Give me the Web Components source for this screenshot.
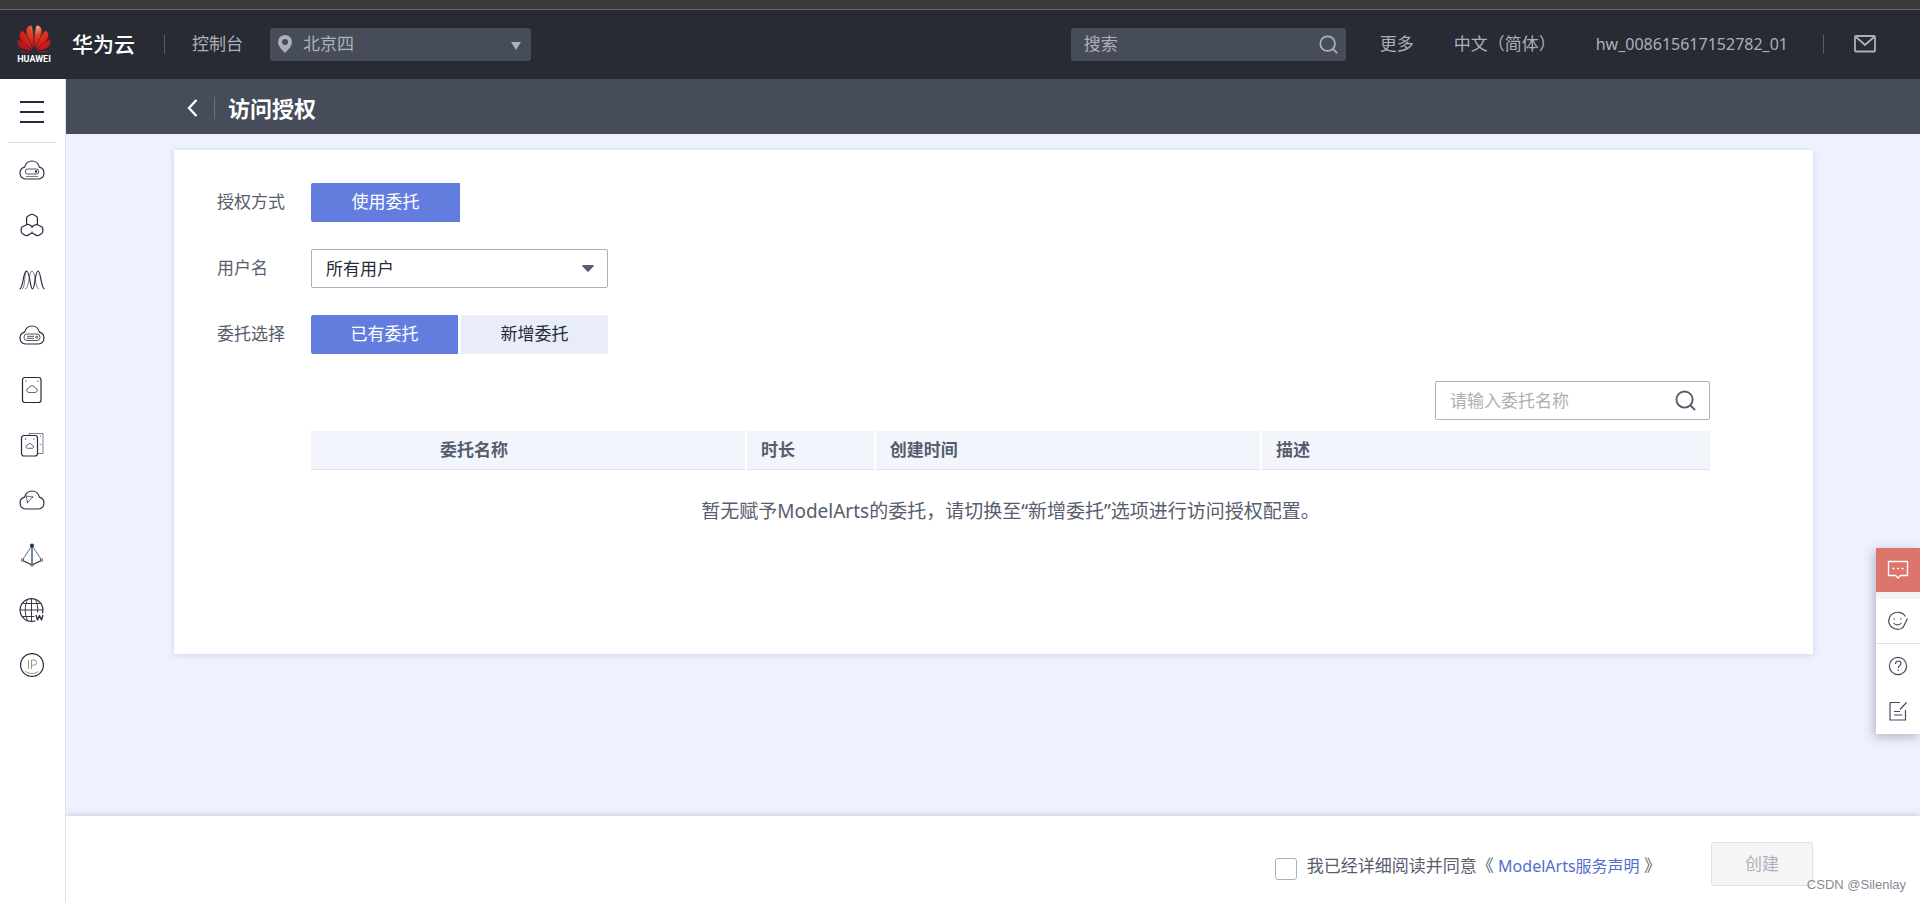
<!DOCTYPE html>
<html lang="zh-CN">
<head>
<meta charset="utf-8">
<meta name="viewport" content="width=device-width, initial-scale=1">
<title>访问授权 - 华为云</title>
<style>
  body { margin: 0; font: 400 17px/24px "Noto Sans", "Noto Sans CJK SC", sans-serif; color: #575d6c; background: #eef2ff; }
</style>
</head>
<body>
<console-app></console-app>
<script>
const RESET = `*,*::before,*::after{box-sizing:border-box}button,input,select{font:inherit;color:inherit;margin:0}svg{display:block}a{text-decoration:none}`;

function define(name, css, html, connected) {
  const tpl = document.createElement('template');
  tpl.innerHTML = `<style>${RESET}${css}</style>${html}`;
  customElements.define(name, class extends HTMLElement {
    constructor() {
      super();
      this.attachShadow({ mode: 'open' }).append(tpl.content.cloneNode(true));
    }
    connectedCallback() {
      if (connected) connected(this);
    }
  });
}

const CLOUD = 'M7.5 23A6 6 0 0 1 6.600 11.200C7.600 7.500 10.600 5 14 5s6.600 2.500 7.400 6.200A6 6 0 0 1 20.500 23z';

const ICONS = {
  server: `<path d="${CLOUD}"/><rect x="7.500" y="13" width="13" height="5" rx="2" stroke-width=".8"/><path d="M8 20.500h12" stroke-width=".6"/><circle cx="18" cy="15.500" r=".6"/>`,
  rings: `<path d="M8.600 13.600V6.800Q8.800 5.800 9.700 5.300L13 3.500q1-.5 2 0l3.300 1.800q.9.500 1.100 1.500v6.800M8.500 13.800L4.400 15.800Q3.200 16.500 3.200 18v2.500q0 1.200 1 1.900l3.300 2q1 .6 2 0L14 22l4.500 2.400q1 .6 2 0l3.300-2q1-.7 1-1.900V18q0-1.500-1.200-2.200l-4.100-2q-1-.4-2 0L14 15.600l-2.500-1.800q-1.500-.7-3 0M14 15.600v1.400M14 20.500V22"/>`,
  waves: `<path d="M1.500 23c4 0 3.500-18 7-18s3.500 18 6 18 2.500-18 5.500-18 3 18 6.500 18"/><path d="M4 23c3.500 0 2-18 5-18M7 23c4.500 0 3.500-18 7-18s3 18 7 18" stroke-width=".6"/>`,
  database: `<path d="${CLOUD}"/><rect x="6" y="13" width="16" height="6.500" rx="3" stroke-width=".8"/><path d="M9 15.300h7M9 17.300h7" stroke-width=".8"/><circle cx="18.800" cy="16.200" r="1.100" stroke-width=".8"/>`,
  disk: `<rect x="4.500" y="1.500" width="18.500" height="25" rx="2.500"/><path d="M7.500 5h.8M19.500 5h.8" stroke-width="1.500"/><path d="M11 16.500a2.200 2.200 0 0 1-.2-4.400 3.300 3.300 0 0 1 6.400 0 2.200 2.200 0 0 1-.2 4.400z" stroke-width=".7"/>`,
  disks: `<rect x="3.500" y="4.500" width="16" height="20.500" rx="2.500"/><path d="M11 4.500V2.500h14v20h-5.500" stroke-width=".6"/><path d="M7 8h.8M15.500 8h.8M22.500 5h.5" stroke-width="1.400"/><path d="M22 12.500l1 1-1 1" stroke-width=".6"/><path d="M9.500 17.300a1.500 1.500 0 0 1 0-3 2.400 2.400 0 0 1 4.600 0 1.500 1.500 0 0 1 0 3z" stroke-width=".7"/>`,
  network: `<path d="${CLOUD}"/><path d="M8 10l1.500 6.500L14.500 11z" stroke-width=".7"/><path d="M9.200 16.500h.8M14.200 11h.8" stroke-width="1.500"/>`,
  pyramid: `<path d="M14 5v19" stroke="#3a5f8c" stroke-width="1.500"/><path d="M14 4.500L4.500 19M14 4.500L23.500 19" stroke-width=".7"/><path d="M4.500 19.500L14 24l9.500-4.500"/><circle cx="14" cy="4.500" r="1.300" fill="#252b3a"/><g fill="#fff"><circle cx="4.500" cy="19" r="1.200" stroke-width=".8"/><circle cx="23.500" cy="19" r="1.200" stroke-width=".8"/><circle cx="14" cy="24" r="1.200" stroke-width=".8"/></g>`,
  globe: `<circle cx="13.500" cy="14" r="11.400"/><path d="M13.500 2.600v22.800M2.100 14h22.800M4.500 7.500h18M4.500 20.500h12M9.500 3.500c-3 6-3 15 0 21M17.500 3.500c2 4 2.500 8 2 13" stroke-width=".9"/><path d="M17 17.500h9.500v8H17z" fill="#fff" stroke="none"/><path d="M18 19l1.500 5 2-4.500 2 4.500 1.500-5" stroke-width="1.300"/>`,
  ip: `<circle cx="14" cy="14" r="11.400"/><path d="M10.500 9v9M13.500 18V9h2.500a2.600 2.600 0 0 1 0 5.200h-2.500M7.500 20.500c4 2.600 9 2.600 13 0" stroke="#9a8672" stroke-width=".9"/>`,
  chat: `<path d="M4.500 5.500h19v14h-7L14 22l-2.500-2.500h-7z" stroke-width="1.300"/><path d="M8.500 12.500h2M13 12.500h2M17.500 12.500h2" stroke-width="1.600"/>`,
  smile: `<path d="M21.500 9.500A9 8.500 0 1 0 16 22M23.500 11.500l-4.500 9-2.500 1.500"/><path d="M9.500 12h1.500M16 12h1.500M9.500 16c2 2.500 6 2.500 8 0"/>`,
  help: `<circle cx="14" cy="14" r="8.600"/><path d="M11.500 12c0-4 5.500-3.800 5.500-.6 0 2.200-2.800 2-2.800 4.600M14.200 17.500v1.500"/>`,
  note: `<path d="M16 5.500H6v17.500h15.500V13M22.500 5.500l-6.500 7M10 14.500h6M10 18h8.500"/>`
};

define('line-icon', `:host{display:inline-flex}`,
  `<svg width="28" height="28" viewBox="0 0 28 28" fill="none" stroke="currentColor" stroke-width="1.200" stroke-linejoin="round" aria-hidden="true"></svg>`,
  el => { el.shadowRoot.querySelector('svg').innerHTML = ICONS[el.getAttribute('name')]; });

define('search-field', `
  :host{display:flex;align-items:center;width:275px;height:39px;border:1px solid #adb0b8;border-radius:2px;background:#fff;padding:0 13px 0 14px;box-sizing:border-box}
  :host([dark]){height:33px;border:0;background:#464c59;border-radius:3px;color:#adb0b8;padding:0 8px 0 13px}
  input{flex:1;min-width:0;border:0;background:none;outline:0;padding:0;height:24px}
  input::placeholder{color:#adb0b8;opacity:1}
  button{border:0;background:none;padding:0;color:#575d6c}
  svg{width:21px;height:21px}
  :host([dark]) button{color:#adb0b8}
  :host([dark]) svg{width:19px;height:19px}`,
  `<input type="search"><button type="button" aria-label="搜索"><svg viewBox="0 0 22 22" fill="none" stroke="currentColor" stroke-width="2"><circle cx="10" cy="10" r="8.500"/><path d="M16 16l5 5"/></svg></button>`,
  el => {
    const input = el.shadowRoot.querySelector('input');
    input.placeholder = el.getAttribute('placeholder');
    input.setAttribute('aria-label', input.placeholder);
  });

define('huawei-logo', `:host{display:flex;flex-direction:column;align-items:center;width:36px;font:700 9px/10px Roboto,sans-serif;color:#fff;gap:1px}`,
  `<svg width="34" height="29" viewBox="0 0 34 29" aria-hidden="true">
    <defs><radialGradient id="g" gradientUnits="userSpaceOnUse" cx="20" cy="2" r="28"><stop offset="0" stop-color="#f3b183"/><stop offset=".3" stop-color="#e5432b"/><stop offset=".6" stop-color="#dc1f14"/><stop offset="1" stop-color="#a81622"/></radialGradient></defs>
    <g fill="url(#g)" stroke="#282b33" stroke-width=".3">
      <path d="M16.600 24.500C17 15 16.500 6 14.500 1.500 11 1 8.500 4 9.500 9c.8 5 4.500 11 7.100 15.500z"/>
      <path d="M15.700 25.500C13.500 18 9.500 10.500 5.500 6.500 2 8.500 1.500 12 4 16c2.500 3.700 7.500 7 11.700 9.500z"/>
      <path d="M15 26.500C11 22 5.500 17.500.8 15.500-.2 19 .7 22 3.500 23.800 6.500 25.800 11 26.600 15 26.500z"/>
      <path d="M14.500 27.500c-4 .2-8-.1-11.500-1.200C4 28.500 6 29 8.500 28.800c2.200-.2 4.300-.6 6-1.300z"/>
      <path d="M17.400 24.500C17 15 17.500 6 19.500 1.500 23 1 25.500 4 24.500 9c-.8 5-4.500 11-7.100 15.500z"/>
      <path d="M18.300 25.500c2.200-7.500 6.200-15 10.200-19C32 8.500 32.500 12 30 16c-2.500 3.700-7.500 7-11.700 9.500z"/>
      <path d="M19 26.500c4-4.500 9.500-9 14.200-11 1 3.500.1 6.500-2.700 8.300-3 2-7.500 2.800-11.500 2.700z"/>
      <path d="M19.500 27.500c4 .2 8-.1 11.500-1.200-1 2.200-3 2.700-5.500 2.500-2.200-.2-4.300-.6-6-1.300z"/>
    </g></svg><span>HUAWEI</span>`);

define('top-bar', `
  :host{display:block;background:#282b33;border-top:9px solid #3b3b3b;color:#adb0b8}
  nav{display:flex;align-items:center;height:70px;padding:0 44px 1px 16px;border-top:1px solid #66686e}
  .brand{display:flex;align-items:center;gap:20px;color:#fff;font-size:21px;font-weight:500}
  a{color:inherit;white-space:nowrap}
  i{width:1px;height:19px;background:#575d6c;flex:none}
  .brand+i{margin:0 27px 0 29px}
  .region{display:flex;align-items:center;width:261px;height:33px;margin-left:27px;padding:0 10px 0 7px;background:#464c59;border-radius:3px;gap:6px}
  .region svg:last-child{margin-top:4px}
  select{flex:1;appearance:none;border:0;background:none;outline:0;padding:0 4px;height:24px}
  search-field{margin-left:auto}
  .more{margin-left:34px}.lang{margin-left:40px}.user{margin:0 35px 0 40px;font-size:16px}
  .mail{margin-left:30px}`,
  `<nav>
    <a class="brand" href="#"><huawei-logo></huawei-logo><span>华为云</span></a><i></i>
    <a href="#">控制台</a>
    <label class="region"><svg width="16" height="18" viewBox="0 0 16 18" fill="#adb0b8" aria-hidden="true"><path fill-rule="evenodd" d="M8 0a7 7 0 0 1 7 7c0 4-4 8-7 11C5 15 1 11 1 7a7 7 0 0 1 7-7zm0 4a3 3 0 1 0 0 6 3 3 0 0 0 0-6z"/></svg>
      <select aria-label="区域"><option>北京四</option></select>
      <svg width="10" height="8" viewBox="0 0 10 8" fill="#adb0b8" aria-hidden="true"><path d="M0 0h10L5 8z"/></svg></label>
    <search-field dark placeholder="搜索"></search-field>
    <a class="more" href="#">更多</a><a class="lang" href="#">中文（简体）</a><a class="user" href="#">hw_008615617152782_01</a><i></i>
    <a class="mail" href="#" aria-label="消息"><svg width="22" height="18" viewBox="0 0 22 18" fill="none" stroke="currentColor" stroke-width="1.800"><rect x="1" y="1" width="20" height="15.500" rx="1"/><path d="M2 2l9 8 9-8"/></svg></a>
  </nav>`);

define('side-rail', `
  :host{display:block;position:relative;z-index:1;box-sizing:border-box;width:66px;flex:none;background:#fff;border-right:1px solid #dfe1e6;color:#252b3a}
  nav{display:flex;flex-direction:column;align-items:center;padding-right:1px}
  button{display:flex;align-items:center;justify-content:center;width:48px;height:64px;border:0;border-bottom:1px solid #dfe1e6;background:none;padding:2px 0 0}
  a{display:flex;align-items:center;justify-content:center;width:48px;height:55px;padding-bottom:2px;color:inherit}`,
  `<nav><button type="button" aria-label="服务列表"><svg width="24" height="24" viewBox="0 0 24 24" stroke="currentColor" stroke-width="2"><path d="M0 2h24M0 12h24M0 22h24"/></svg></button>
  ${[['server','弹性云服务器'],['rings','裸金属'],['waves','弹性伸缩'],['database','云服务'],['disk','云硬盘'],['disks','云备份'],['network','虚拟私有云'],['pyramid','弹性负载均衡'],['globe','域名注册'],['ip','弹性公网IP']].map(([n, t]) => `<a href="#" aria-label="${t}"><line-icon name="${n}"></line-icon></a>`).join('')}</nav>`);

define('page-title', `
  :host{display:flex;align-items:center;box-sizing:border-box;height:55px;padding:2px 0 0 121px;background:#464c59;color:#fff}
  a{color:inherit}
  i{width:1px;height:22px;background:#6b707c;margin:0 13px 0 16px}
  h1{margin:0;font-size:22px;line-height:32px;font-weight:700}`,
  `<a href="#" aria-label="返回"><svg width="11" height="18" viewBox="0 0 11 18" fill="none" stroke="currentColor" stroke-width="2.400"><path d="M9.500 1L2 9l7.500 8"/></svg></a><i></i><h1><slot></slot></h1>`);

define('form-row', `
  :host{display:grid;grid-template-columns:94px minmax(0,1fr);min-height:39px}
  .label{line-height:37px}`,
  `<div class="label"><slot name="label"></slot></div><div><slot></slot></div>`);

define('agency-table', `
  :host{display:block}
  search-field{margin:0 0 11px auto}
  table{width:100%;border-collapse:collapse;table-layout:fixed}
  th{height:38px;padding:0 0 0 14px;text-align:left;font-weight:700;background:#f2f5fc;border-bottom:1px solid #dfe1e6}
  th+th{border-left:2px solid #fff}
  th:first-child{padding-left:129px;width:31.100%}
  th:nth-child(2){width:9.200%}th:nth-child(3){width:27.600%}
  td{padding:27px 0 0;text-align:center;font-size:19px;line-height:28px;height:120px;vertical-align:top}`,
  `<search-field placeholder="请输入委托名称"></search-field>
  <table><thead><tr><th scope="col">委托名称</th><th scope="col">时长</th><th scope="col">创建时间</th><th scope="col">描述</th></tr></thead>
  <tbody><tr><td colspan="4">暂无赋予ModelArts的委托，请切换至“新增委托”选项进行访问授权配置。</td></tr></tbody></table>`);

define('auth-card', `
  :host{display:flex;flex-direction:column;gap:27px;margin:16px 107px 0 108px;padding:33px 103px 65px 43px;background:#fff;box-shadow:0 1px 6px rgba(70,90,150,.2)}
  .seg{display:flex;gap:3px;width:297px}
  .seg button{flex:1;height:39px;border:0;padding:0 0 2px;background:#e9edfa;color:#252b3a;border-radius:0 2px 2px 0}
  .seg button[aria-pressed=true]{background:#637ddf;color:#fff;border-radius:2px 0 0 2px}
  .seg.one{width:149px}
  .pick{display:flex;align-items:center;width:297px;height:39px;border:1px solid #adb0b8;border-radius:2px;padding-right:13px}
  select{flex:1;appearance:none;border:0;background:none;outline:0;padding:0 14px;height:37px;color:#252b3a}
  agency-table{margin-left:94px}`,
  `<form-row><span slot="label">授权方式</span><div class="seg one"><button type="button" aria-pressed="true">使用委托</button></div></form-row>
  <form-row><label slot="label" for="u">用户名</label><div class="pick"><select id="u"><option>所有用户</option></select><svg width="12" height="7" viewBox="0 0 12 7" fill="#575d6c" aria-hidden="true"><path d="M1 0h10a.8.8 0 0 1 .6 1.300L6.700 6.500a1 1 0 0 1-1.400 0L.4 1.300A.8.8 0 0 1 1 0z"/></svg></div></form-row>
  <form-row><span slot="label">委托选择</span><div class="seg"><button type="button" aria-pressed="true">已有委托</button><button type="button" aria-pressed="false">新增委托</button></div></form-row>
  <agency-table></agency-table>`);

define('action-bar', `
  :host{display:flex;justify-content:flex-end;align-items:flex-start;box-sizing:border-box;height:86px;padding:26px 107px 0 0;background:#fff;box-shadow:0 -1px 6px rgba(70,90,150,.25);position:relative}
  .agree{display:flex;align-items:center;gap:10px;height:54px;margin-right:50px}
  input{appearance:none;width:22px;height:22px;border:1px solid #adb0b8;border-radius:3px;background:#fff;flex:none;margin:0}
  label{padding-bottom:6px}
  a{color:#526ecc;font-size:16px}
  button{width:102px;height:44px;border:1px solid #dfe1e6;border-radius:2px;background:#f5f5f6;color:#adb0b8;padding:0}
  small{position:absolute;right:14px;bottom:8px;font:13px/18px "Liberation Sans",sans-serif;color:#888b92}`,
  `<div class="agree"><input type="checkbox" id="ok"><label for="ok">我已经详细阅读并同意《 <a href="#">ModelArts服务声明</a> 》</label></div><button type="button" disabled>创建</button><small>CSDN @Silenlay</small>`);

define('help-dock', `
  :host{position:fixed;z-index:2;right:0;top:548px;width:44px;display:flex;flex-direction:column;gap:7px;background:#f3f3f5;box-shadow:-2px 3px 10px rgba(60,65,85,.35);color:#464c59}
  button{display:flex;align-items:center;justify-content:center;width:100%;height:45px;border:0;padding:0 0 1px;background:#fff}
  .chat{height:44px;padding:0;background:#de756c;color:#fff}
  .rest{background:#fff}
  .rest button:first-child{border-bottom:1px solid #dfe1e6}`,
  `<button class="chat" type="button" aria-label="在线咨询"><line-icon name="chat"></line-icon></button>
  <div class="rest"><button type="button" aria-label="评价"><line-icon name="smile"></line-icon></button><button type="button" aria-label="帮助"><line-icon name="help"></line-icon></button><button type="button" aria-label="反馈"><line-icon name="note"></line-icon></button></div>`);

define('console-app', `
  :host{display:flex;flex-direction:column;min-height:100vh}
  .body{flex:1;display:flex}
  main{flex:1;min-width:0;display:flex;flex-direction:column}
  action-bar{margin-top:auto}`,
  `<top-bar></top-bar><div class="body"><side-rail></side-rail><main><page-title>访问授权</page-title><auth-card></auth-card><action-bar></action-bar></main></div><help-dock></help-dock>`);
</script>
</body>
</html>
